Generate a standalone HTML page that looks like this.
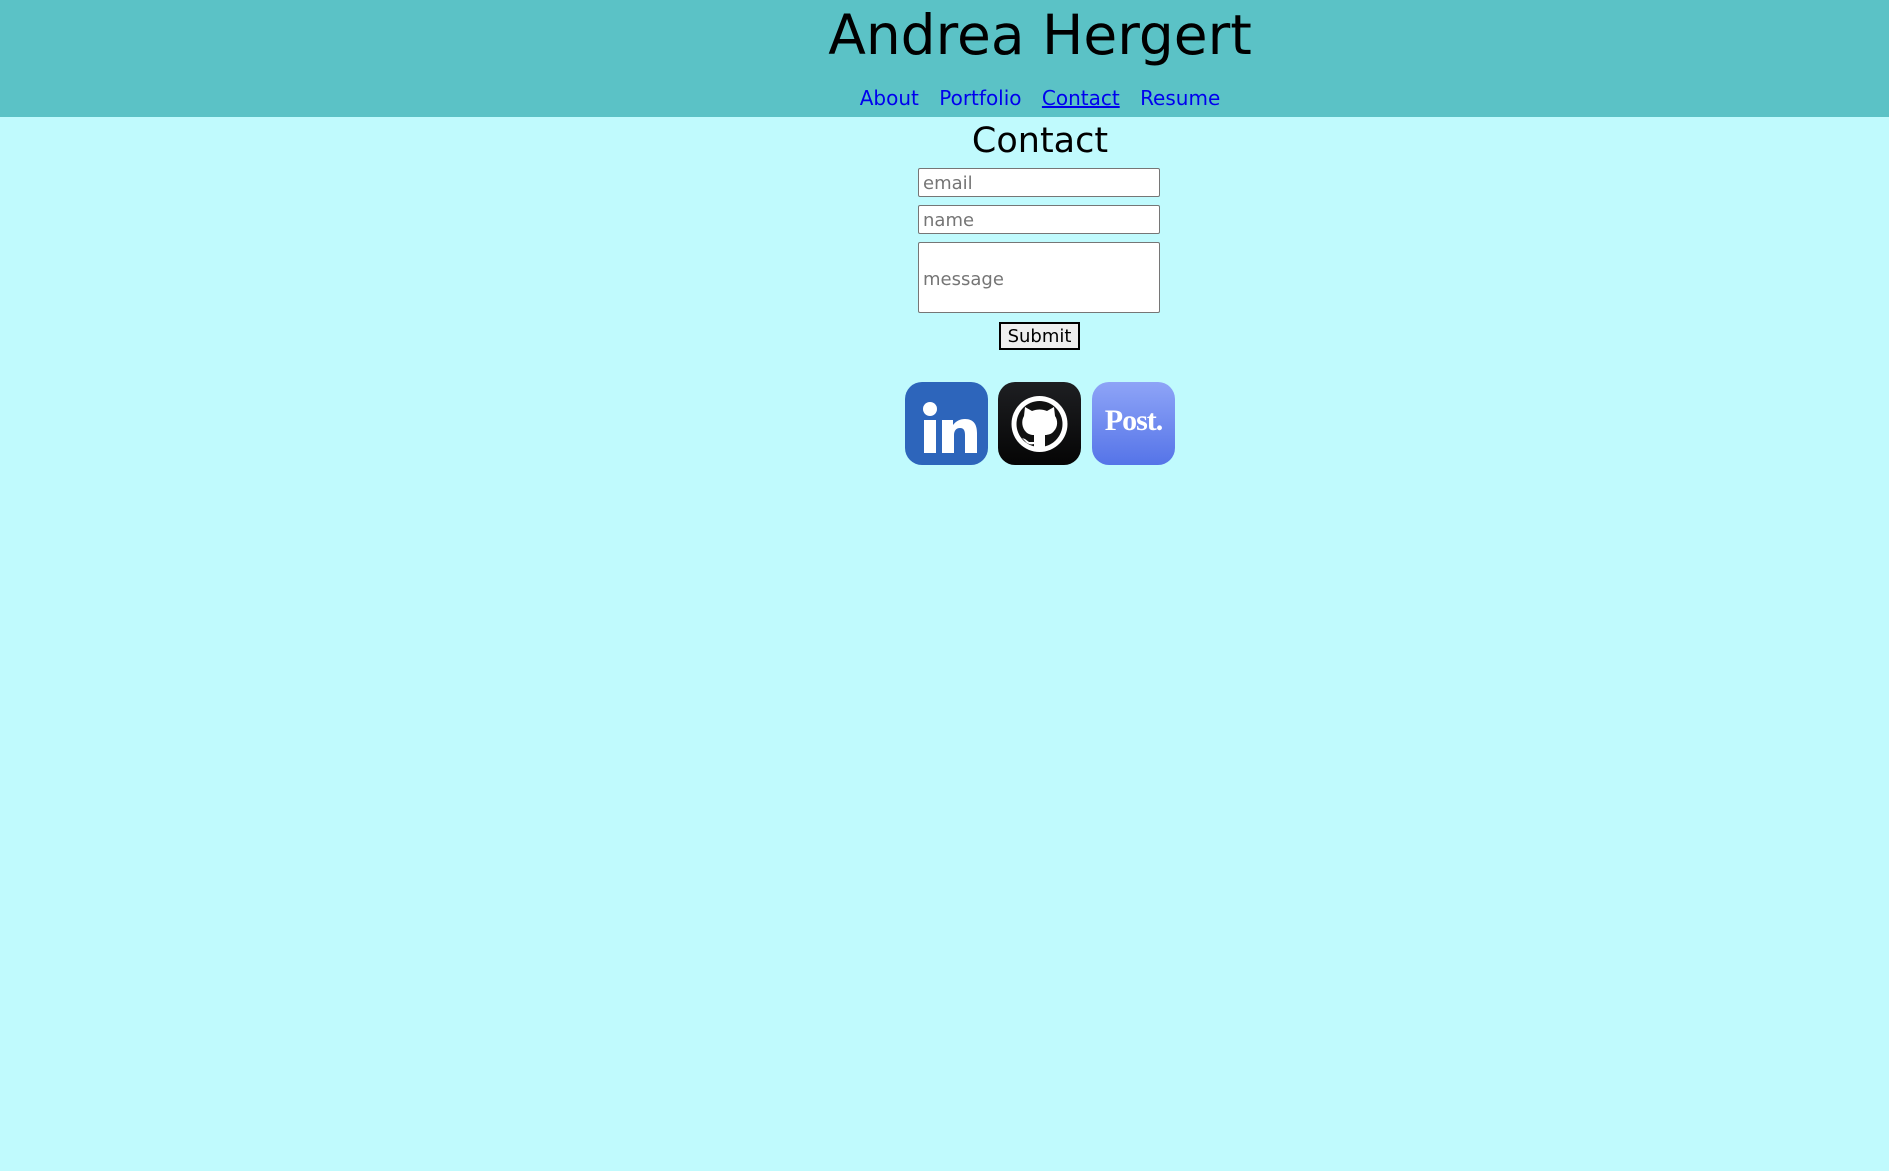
<!DOCTYPE html>
<html><head><meta charset="utf-8"><style>
*{box-sizing:border-box}
html,body{margin:0;padding:0;width:1889px;height:1171px;overflow:hidden;background:#c0fafd;font-family:"DejaVu Sans","Liberation Sans",sans-serif}
.hdr{position:absolute;left:0;top:0;width:1889px;height:117px;background:#5bc2c6}
.t{position:absolute;left:0;width:2080px;text-align:center;white-space:nowrap}
h1{margin:0;font-weight:normal;font-size:55px;line-height:1;top:8px}
.nav{top:88px;font-size:20px;line-height:1}
.nav a{color:#0000ee;text-decoration:none;margin:0 7px}
.nav a.u{text-decoration:underline}
.h2{top:124px;font-size:35px;line-height:1}
.in{position:absolute;left:918px;width:242px;background:#fff;border:1px solid #767676;border-radius:2px;color:#757575;font-size:18px;padding-left:4px}
.btn{position:absolute;left:999px;top:322px;width:81px;height:28px;border:2px solid #000;background:#efefef;font-size:18px;text-align:center;line-height:26px}
.ic{position:absolute;top:382px;width:83px;height:83px;border-radius:17px;overflow:hidden}
</style></head><body>
<div class="hdr"></div>
<h1 class="t">Andrea Hergert</h1>
<div class="t nav"><a>About</a> <a>Portfolio</a> <a class="u">Contact</a> <a>Resume</a></div>
<div class="t h2">Contact</div>
<div class="in" style="top:168px;height:29px;line-height:29px">email</div>
<div class="in" style="top:205px;height:29px;line-height:29px">name</div>
<div class="in" style="top:242px;height:71px;line-height:73px">message</div>
<div class="btn">Submit</div>
<div class="ic" style="left:905px;background:#2d65bb">
<svg width="83" height="83" viewBox="0 0 83 83"><circle cx="25" cy="27" r="7" fill="#fff"/><rect x="19" y="38" width="12" height="33" fill="#fff"/><path d="M37 38h11v5c3-4 7-6 12-6 9 0 12 6 12 14v20H60V53c0-4-1-7-5-7s-6 3-6 7v18H37z" fill="#fff"/></svg></div>
<div class="ic" style="left:998px;background:linear-gradient(#1e1f22,#050505)">
<svg width="83" height="83" viewBox="0 0 83 83"><circle cx="41.5" cy="42" r="28" fill="#fff"/><circle cx="41.5" cy="42" r="23" fill="#111"/><path d="M26 34l1-9 7 4c5-2 10-2 15 0l7-4 1 9c3 4 3 11-1 15-2 3-6 4-9 4v14h-11V62c-3 1-7 0-9-3l-3-3 3 1 4 3h5v-7c-3 0-6-1-8-3-4-4-5-11-2-16z" fill="#fff"/><path d="M28 35c-2 6 0 12 6 14h15c6-2 8-8 6-14l-1-7-5 3c-5-2-10-2-15 0l-5-3z" fill="#fff"/></svg></div>
<div class="ic" style="left:1092px;background:linear-gradient(#8ea4f7,#5574e8)">
<div style="position:absolute;left:0;width:83px;top:24px;text-align:center;color:#fff;font-family:'Liberation Serif',serif;font-weight:bold;font-size:30px;line-height:1;letter-spacing:-1px">Post.</div></div>
</body></html>
